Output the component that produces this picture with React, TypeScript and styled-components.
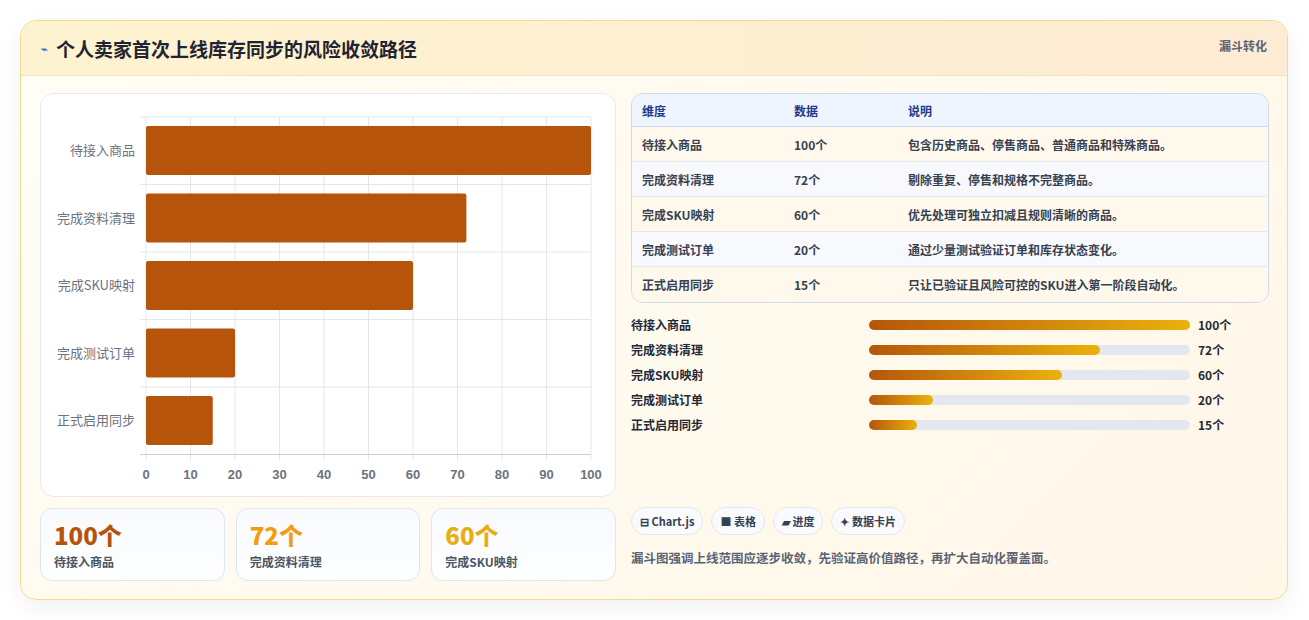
import React from "react";
import styled, { createGlobalStyle } from "styled-components";

const G = createGlobalStyle`
  body { margin: 0; background: #fff; font-family: "Noto Sans CJK SC", "Noto Sans", sans-serif; }
  * { box-sizing: border-box; }
`;
const data = [
  { name: "待接入商品", v: 100, d: "包含历史商品、停售商品、普通商品和特殊商品。" },
  { name: "完成资料清理", v: 72, d: "剔除重复、停售和规格不完整商品。" },
  { name: "完成SKU映射", v: 60, d: "优先处理可独立扣减且规则清晰的商品。" },
  { name: "完成测试订单", v: 20, d: "通过少量测试验证订单和库存状态变化。" },
  { name: "正式启用同步", v: 15, d: "只让已验证且风险可控的SKU进入第一阶段自动化。" },
];
const Page = styled.div` padding: 20px 21px 20px 20px; `;
const Card = styled.div`
  width: 1268px; height: 580px; border: 1px solid #f6d98a; border-radius: 16px;
  background: linear-gradient(135deg, #fffdf5, #fff7e8); overflow: hidden;
  box-shadow: 0 8px 24px rgba(0,0,0,0.06);
`;
const Header = styled.div`
  height: 55px; background: linear-gradient(90deg, #fef3d0, #fdebd3);
  border-bottom: 1px solid #f3e3c0; display: flex; align-items: center; justify-content: space-between;
  padding: 0 20px 0 20px;
`;
const Title = styled.h1`
  margin: 0; font-size: 19px; font-weight: 700; color: #1f2433; display: flex; align-items: center; gap: 8px;
`;
const Tag = styled.span` font-size: 12px; font-weight: 700; color: #5b6475; align-self: flex-start; margin-top: 16px; `;
const Body = styled.div` display: grid; grid-template-columns: 576px 638px; gap: 15px; padding: 17px 19px 0 19px; `;
const Col = styled.div` display: flex; flex-direction: column; `;
const ChartBox = styled.div`
  height: 404px; background: #fff; border: 1px solid #e6e9f0; border-radius: 14px;
`;
const Stats = styled.div` display: grid; grid-template-columns: repeat(3, 1fr); gap: 11px; margin-top: 11px; `;
const Stat = styled.div`
  height: 73px; border: 1px solid #dde5f0; border-radius: 12px; background: linear-gradient(#f8fafd, #fdfeff);
  padding: 10px 13px;
`;
const StatNum = styled.div<{ c: string }>` font-size: 24px; font-weight: 800; color: ${p => p.c}; line-height: 32px; `;
const StatLbl = styled.div` font-size: 12px; font-weight: 600; color: #4b5563; margin-top: 2px; `;
const Table = styled.div` border: 1px solid #cfdbe8; border-radius: 12px; overflow: hidden; `;
const Row = styled.div<{ bg: string; head?: boolean }>`
  display: grid; grid-template-columns: 152px 114px 1fr; height: ${p => p.head ? 33 : 35}px; align-items: center;
  padding-left: 10px; background: ${p => p.bg}; font-size: 12px; font-weight: 600;
  color: ${p => p.head ? "#1e3a8a" : "#374151"}; border-bottom: 1px solid ${p => p.head ? "#cfdbe8" : "#e5eaf1"};
  &:last-child { border-bottom: none; }
`;
const Bars = styled.div` display: flex; flex-direction: column; gap: 9px; margin-top: 13px; `;
const BarRow = styled.div` display: grid; grid-template-columns: 238px 329px 1fr; align-items: center; height: 16px; font-size: 12px; font-weight: 600; color: #1f2937; `;
const Track = styled.div` height: 10px; border-radius: 5px; background: #e3e8f0; margin-right: 8px; `;
const Fill = styled.div` height: 100%; border-radius: 5px; background: linear-gradient(90deg, #b5560a, #ebb10c); `;
const Val = styled.span` font-weight: 700; color: #1f2937; `;
const Chips = styled.div` display: flex; gap: 8px; margin-top: auto; `;
const Chip = styled.span`
  height: 28px; padding: 0 8px; border: 1px solid #e3e8ef; border-radius: 14px; background: #f9fafc;
  font-size: 11px; font-weight: 700; color: #334155; display: inline-flex; align-items: center; gap: 3px;
`;
const Note = styled.p` margin: 13px 0 14px; font-size: 12.5px; font-weight: 600; color: #5b6475; `;

function Chart() {
  const x0 = 105, x1 = 550, y0 = 23, rowH = 67.5;
  const sx = (v: number) => x0 + (v / 100) * (x1 - x0);
  return (
    <svg width="576" height="404" style={{ display: "block" }}>
      {Array.from({ length: 11 }, (_, i) => (
        <g key={i}>
          <line x1={sx(i * 10)} x2={sx(i * 10)} y1={y0} y2={y0 + rowH * 5 + 6} stroke="#e3e6ec" />
          <text x={sx(i * 10)} y={385} textAnchor="middle" fontSize="13" fontWeight="700" fill="#6b7280" fontFamily="Liberation Sans, sans-serif">{i * 10}</text>
        </g>
      ))}
      {Array.from({ length: 6 }, (_, i) => (
        <line key={i} x1={x0 - 6} x2={x1} y1={y0 + i * rowH} y2={y0 + i * rowH} stroke={i === 5 ? "#c9ced6" : "#e3e6ec"} />
      ))}
      {data.map((d, i) => (
        <g key={d.name}>
          <rect x={x0} y={y0 + i * rowH + 9} width={sx(d.v) - x0} height={49} rx="2" fill="#b5540a" />
          <text x={x0 - 11} y={y0 + i * rowH + 38} textAnchor="end" fontSize="13" fill="#6b7280" fontFamily="Noto Sans CJK SC, sans-serif">{d.name}</text>
        </g>
      ))}
    </svg>
  );
}

export default function App() {
  const bgs = ["#fef9ec", "#f7f9fc"];
  return (
    <Page>
      <G />
      <Card>
        <Header>
          <Title><span style={{ fontSize: 11, color: "#4f6bd8" }}>⌁</span>个人卖家首次上线库存同步的风险收敛路径</Title>
          <Tag>漏斗转化</Tag>
        </Header>
        <Body>
          <Col>
            <ChartBox><Chart /></ChartBox>
            <Stats>
              <Stat><StatNum c="#b5540a">100个</StatNum><StatLbl>待接入商品</StatLbl></Stat>
              <Stat><StatNum c="#f39c12">72个</StatNum><StatLbl>完成资料清理</StatLbl></Stat>
              <Stat><StatNum c="#e6ae14">60个</StatNum><StatLbl>完成SKU映射</StatLbl></Stat>
            </Stats>
          </Col>
          <Col>
            <Table>
              <Row head bg="#eef5fe"><span>维度</span><span>数据</span><span>说明</span></Row>
              {data.map((d, i) => (
                <Row key={d.name} bg={bgs[i % 2]}><span>{d.name}</span><span>{d.v}个</span><span>{d.d}</span></Row>
              ))}
            </Table>
            <Bars>
              {data.map(d => (
                <BarRow key={d.name}>
                  <span>{d.name}</span>
                  <Track><Fill style={{ width: `${d.v}%` }} /></Track>
                  <Val>{d.v}个</Val>
                </BarRow>
              ))}
            </Bars>
            <Chips>
              <Chip>⊟ Chart.js</Chip><Chip>■ 表格</Chip><Chip>▰ 进度</Chip><Chip>✦ 数据卡片</Chip>
            </Chips>
            <Note>漏斗图强调上线范围应逐步收敛，先验证高价值路径，再扩大自动化覆盖面。</Note>
          </Col>
        </Body>
      </Card>
    </Page>
  );
}
